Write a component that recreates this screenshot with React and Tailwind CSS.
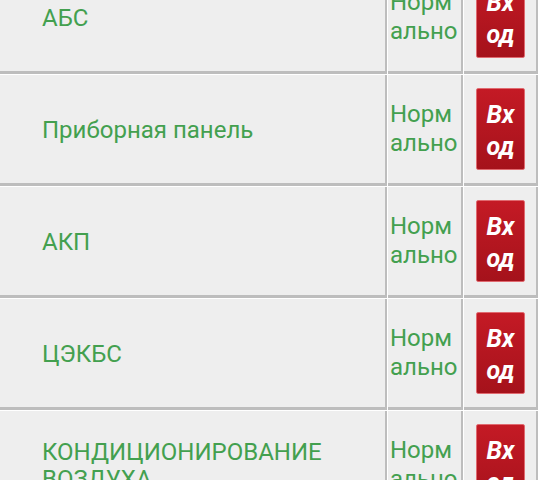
const rows = [
  "АБС",
  "Приборная панель",
  "АКП",
  "ЦЭКБС",
  "КОНДИЦИОНИРОВАНИЕ ВОЗДУХА",
]

const App = () => {
  return (
    <div className="h-[480px] w-[540px] overflow-hidden bg-white" style={{ fontFamily: "Roboto, 'Noto Sans', sans-serif" }}>
      <div className="-mt-[37px] flex flex-col gap-px">
        {rows.map((name) => (
          <div key={name} className="flex gap-px">
            <div className="flex h-[111px] w-[387px] items-center border-b-[3px] border-r-2 border-[#bdbdbd] bg-[#eeeeee] pl-[42px] pr-4 pt-[2px]">
              <span className="text-[24px] leading-[27px] text-[#43a04f]">{name}</span>
            </div>
            <div className="flex h-[111px] w-[75px] items-center border-b-[3px] border-r-2 border-[#bdbdbd] bg-[#eeeeee] pl-[2px]">
              <span className="text-[24px] leading-[29px] text-[#43a04f]">Норм<br />ально</span>
            </div>
            <div className="flex h-[111px] w-[74px] items-center justify-center border-b-[3px] border-r-2 border-[#bdbdbd] bg-[#eeeeee] pl-px">
              <button className="flex h-[82px] w-[49px] flex-col items-center justify-center rounded-[2px] border border-[#e06a70] bg-gradient-to-b from-[#c41a25] to-[#a5121b] pt-[3px] text-[25px] font-bold italic leading-[32px] text-white">
                <span>Вх</span>
                <span>од</span>
              </button>
            </div>
          </div>
        ))}
      </div>
    </div>
  )
}

export default App
